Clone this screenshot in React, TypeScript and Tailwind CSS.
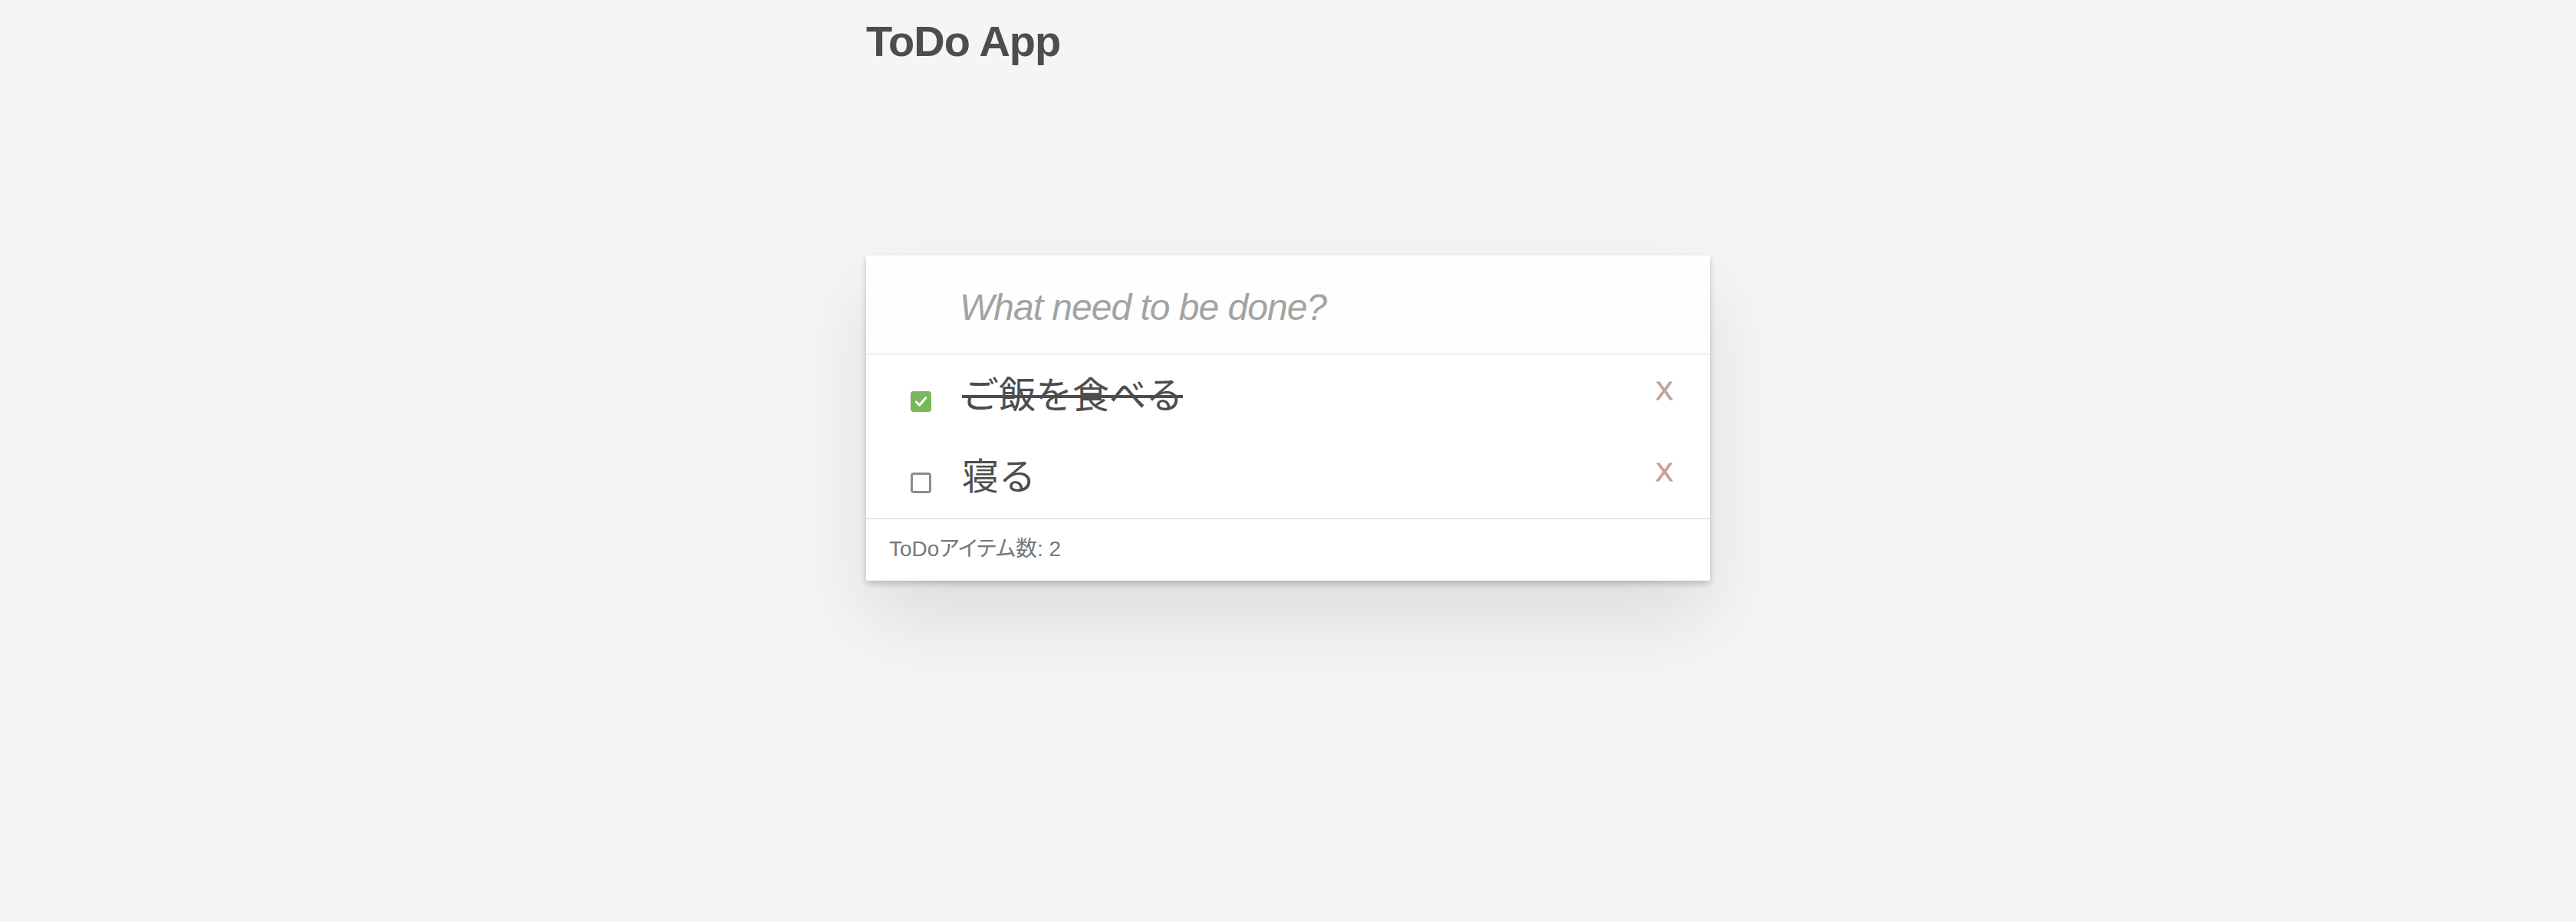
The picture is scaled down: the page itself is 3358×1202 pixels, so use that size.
import { useState } from "react";

type Todo = { id: number; title: string; done: boolean };

const initialTodos: Todo[] = [
    { id: 1, title: "ご飯を食べる", done: true },
    { id: 2, title: "寝る", done: false },
];

function CheckBox({ checked, onToggle }: { checked: boolean; onToggle: () => void }) {
    if (checked) {
        return (
            <button onClick={onToggle} className="mt-[15px] w-[27px] h-[27px] rounded-[4px] bg-[#78b85a] flex items-center justify-center shrink-0">
                <svg width="19" height="19" viewBox="0 0 20 20" fill="none">
                    <path d="M3.5 10.5 L8 15 L16.5 5" stroke="white" strokeWidth="3.2" strokeLinecap="round" strokeLinejoin="round" />
                </svg>
            </button>
        );
    }
    return (
        <button onClick={onToggle} className="mt-[15px] w-[27px] h-[27px] rounded-[4px] border-[3.5px] border-[#8c8c96] bg-white shrink-0" />
    );
}

export default function App() {
    const [todos, setTodos] = useState<Todo[]>(initialTodos);
    const [text, setText] = useState("");

    const toggle = (id: number) =>
        setTodos(todos.map((t) => (t.id === id ? { ...t, done: !t.done } : t)));
    const remove = (id: number) => setTodos(todos.filter((t) => t.id !== id));

    return (
        <div className="min-h-screen bg-[#f5f5f5] font-['Liberation_Sans','Noto_Sans_CJK_JP',sans-serif] text-[#4d4d4d]">
            <div className="w-[1100px] mx-auto pt-[26px]">
                <h1 className="text-[56px] leading-[56px] font-bold tracking-[-1px] text-[#4d4d4d]">ToDo App</h1>

                <div className="mt-[251px] bg-white shadow-[0_4px_8px_rgba(0,0,0,0.2),0_50px_100px_rgba(0,0,0,0.1)]">
                    <input
                        value={text}
                        onChange={(e) => setText(e.target.value)}
                        onKeyDown={(e) => {
                            if (e.key === "Enter" && text.trim()) {
                                setTodos([...todos, { id: Date.now(), title: text.trim(), done: false }]);
                                setText("");
                            }
                        }}
                        placeholder="What need to be done?"
                        className="block w-full h-[130px] pt-[43px] pb-[36px] pl-[122px] pr-8 text-[48px] leading-[48px] tracking-[-1px] bg-[#fefefe] outline-none border-b-[3px] border-[#f3f3f3] placeholder:italic placeholder:text-[#a3a3a3]"
                    />

                    <ul>
                        {todos.map((todo) => (
                            <li key={todo.id} className="h-[106px] flex items-center pl-[58px] pr-[48px]">
                                <CheckBox checked={todo.done} onToggle={() => toggle(todo.id)} />
                                <span className={`ml-[40px] flex-1 text-[48px] leading-[48px] ${todo.done ? "line-through" : ""}`}>
                                    {todo.title}
                                </span>
                                <button onClick={() => remove(todo.id)} className="mb-[14px] text-[34px] leading-[34px] text-[#c69e9b] [-webkit-text-stroke:0.8px_#c69e9b]">
                                    X
                                </button>
                            </li>
                        ))}
                    </ul>

                    <div className="h-[82px] border-t-2 border-[#e6e6e6] pt-[25px] pl-[30px] text-[28px] leading-[28px] text-[#777777] [font-feature-settings:'palt']">
                        ToDoアイテム数: {todos.length}
                    </div>
                </div>
            </div>
        </div>
    );
}
